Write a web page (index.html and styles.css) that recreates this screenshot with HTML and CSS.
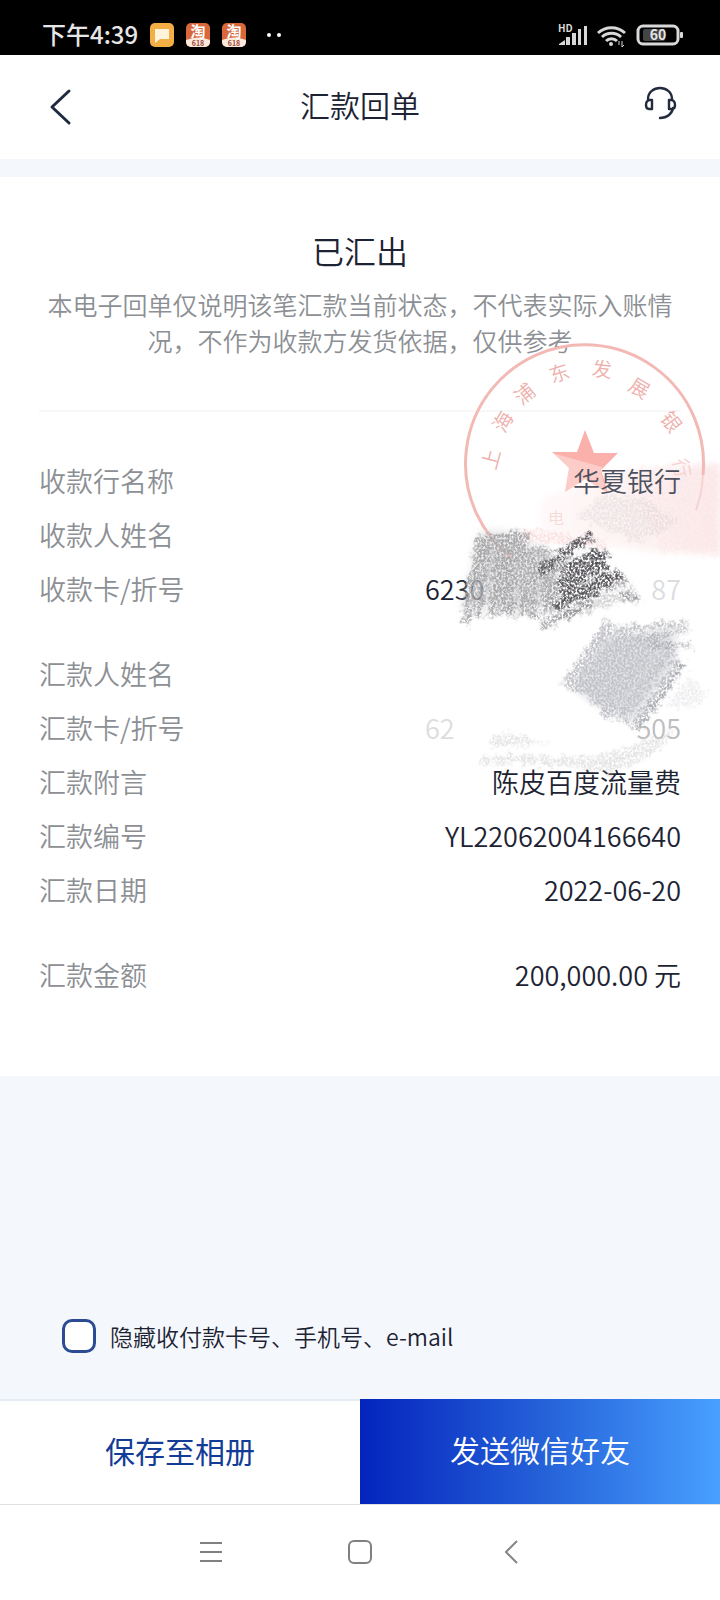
FILE: index.html
```
<!DOCTYPE html>
<html lang="zh-CN">
<head>
    <meta charset="UTF-8">
    <meta name="viewport" content="width=device-width, initial-scale=1.0">
    <title>汇款回单</title>
    <link rel="stylesheet" href="styles.css">
</head>
<body>
    <div class="status-bar">
        <span class="time">下午4:39</span>
        <svg class="app-icon" viewBox="0 0 24 24">
            <rect width="24" height="24" rx="5" fill="#f3ae45"/>
            <path d="M5 6h14v10h-9l-5 4z" fill="#fff3dc"/>
        </svg>
        <svg class="app-icon" viewBox="0 0 24 24">
            <rect width="24" height="24" rx="5" fill="#d9673c"/>
            <path d="M0 17q12-5 24 0v2a5 5 0 0 1-5 5H5a5 5 0 0 1-5-5z" fill="#fbe9df"/>
            <text class="app-name" x="12" y="14">淘</text>
            <text class="app-tag" x="12" y="23">618</text>
        </svg>
        <svg class="app-icon" viewBox="0 0 24 24">
            <rect width="24" height="24" rx="5" fill="#d9673c"/>
            <path d="M0 17q12-5 24 0v2a5 5 0 0 1-5 5H5a5 5 0 0 1-5-5z" fill="#fbe9df"/>
            <text class="app-name" x="12" y="14">淘</text>
            <text class="app-tag" x="12" y="23">618</text>
        </svg>
        <svg class="more" width="16" height="24" viewBox="0 0 16 24" fill="#fff">
            <circle cx="3" cy="12" r="2"/>
            <circle cx="13" cy="12" r="2"/>
        </svg>
        <div class="status-right">
            <svg width="30" height="24" viewBox="0 0 30 24" fill="#d8d8d8">
                <text class="hd" x="0" y="9">HD</text>
                <path d="M1 22v-1l6-4v5zM8 14h4v8H8zM14 10h4v12h-4zM20 6h3v16h-3zM26 3h3v19h-3z"/>
            </svg>
            <svg width="30" height="24" viewBox="0 0 30 24" fill="none" stroke="#d8d8d8" stroke-width="3">
                <path d="M1 10a20 20 0 0 1 27 0M5 14a14 14 0 0 1 19 0M9 18a8 8 0 0 1 11 0"/>
                <circle cx="14" cy="21" r="1" stroke-width="2"/>
                <path d="M22 22v-4M25 18v6M25 24l2-2" stroke-width="1"/>
            </svg>
            <svg width="48" height="24" viewBox="0 0 48 24">
                <rect x="7" y="6" width="22" height="12" rx="2" fill="#444"/>
                <rect x="2" y="3" width="40" height="18" rx="5" fill="none" stroke="#d8d8d8" stroke-width="3"/>
                <rect x="44" y="9" width="3" height="6" rx="1" fill="#d8d8d8"/>
                <text class="battery-level" x="22" y="17">60</text>
            </svg>
        </div>
    </div>

    <header class="header">
        <button class="icon-btn" aria-label="返回">
            <svg width="24" height="36" viewBox="0 0 24 36" fill="none" stroke="#1d2a40" stroke-width="3" stroke-linecap="round" stroke-linejoin="round">
                <path d="M21 2L4 18l17 16"/>
            </svg>
        </button>
        <h1>汇款回单</h1>
        <button class="icon-btn service" aria-label="客服">
            <svg width="34" height="34" viewBox="0 0 34 34" fill="none" stroke="#242b3e" stroke-width="2.4" stroke-linecap="round" stroke-linejoin="round">
                <path d="M5 13C5 6 11 2 17 2s12 4 12 11M30 22c-1 6-6 10-13 10"/>
                <path d="M9 14v9H6c-2 0-3-2-3-4s1-5 4-5zM26 14v9h3c2 0 3-2 3-4s-1-5-4-5z"/>
            </svg>
        </button>
    </header>

    <main>
        <section class="receipt">
            <h2>已汇出</h2>
            <p class="notice">本电子回单仅说明该笔汇款当前状态，不代表实际入账情况，不作为收款方发货依据，仅供参考</p>

            <dl class="details">
                <div class="group">
                    <div class="row"><dt>收款行名称</dt><dd class="bank">华夏银行</dd></div>
                    <div class="row"><dt>收款人姓名</dt><dd></dd></div>
                    <div class="row"><dt>收款卡/折号</dt><dd class="card-no"><span>6230</span><span class="faint">87</span></dd></div>
                </div>
                <div class="group">
                    <div class="row"><dt>汇款人姓名</dt><dd></dd></div>
                    <div class="row"><dt>汇款卡/折号</dt><dd class="card-no"><span class="faint">62</span><span class="worn">505</span></dd></div>
                    <div class="row"><dt>汇款附言</dt><dd>陈皮百度流量费</dd></div>
                    <div class="row"><dt>汇款编号</dt><dd>YL22062004166640</dd></div>
                    <div class="row"><dt>汇款日期</dt><dd>2022-06-20</dd></div>
                </div>
                <div class="group">
                    <div class="row"><dt>汇款金额</dt><dd>200,000.00 元</dd></div>
                </div>
            </dl>

            <!-- seal and the crayon marks over the private fields -->
            <svg class="overlay" width="280" height="440" viewBox="440 340 280 440">
                <defs>
                    <filter id="crayon" x="-15%" y="-15%" width="130%" height="130%">
                        <feTurbulence type="fractalNoise" baseFrequency="0.5 0.4" numOctaves="4" seed="4" result="noise"/>
                        <feTurbulence type="fractalNoise" baseFrequency="0.15" numOctaves="3" seed="9" result="wave"/>
                        <feGaussianBlur in="SourceGraphic" stdDeviation="1.5" result="soft"/>
                        <feDisplacementMap in="soft" in2="wave" scale="14" xChannelSelector="R" yChannelSelector="G" result="rough"/>
                        <feColorMatrix in="noise" type="matrix" values="0 0 0 0 0  0 0 0 0 0  0 0 0 0 0  0 0 0 3.5 -1.1" result="grain"/>
                        <feComposite in="rough" in2="grain" operator="in"/>
                    </filter>
                    <filter id="soft" x="-20%" y="-20%" width="140%" height="140%">
                        <feGaussianBlur stdDeviation="4"/>
                    </filter>
                    <linearGradient id="wash" x1="0" y1="0" x2="1" y2="0">
                        <stop offset="0" stop-color="#fdeeee" stop-opacity="0.4"/>
                        <stop offset="1" stop-color="#fbe6e7" stop-opacity="0.8"/>
                    </linearGradient>
                </defs>

                <path d="M541 500L600 474l120-10v90l-60-2-120-16z" fill="url(#wash)" filter="url(#soft)"/>
                <path d="M630 468l90-5v92l-60-3z" fill="#fbdfe0" opacity="0.35" filter="url(#crayon)"/>
                <path d="M520 528l90 14-2 5-88-7z" fill="#f8d3d4" opacity="0.7" filter="url(#crayon)"/>

                <path d="M512 558A119 119 0 1 1 703 475" fill="none" stroke="#f2b9b5" stroke-width="3"/>
                <path d="M703 475A119 119 0 0 1 696 510" fill="none" stroke="#f6d3d1" stroke-width="2"/>
                <path d="M585 430l9 23h24l-17 17 7 23-23-14-20 13 4-24-17-16h25z" fill="#fbb1ab"/>
                <path d="M552 453l50 14-1 6 5 18-21-12-20 13 4-24z" fill="#fff" opacity="0.35"/>
                <g class="seal-text">
                    <text transform="translate(490 459) rotate(-75)">上</text>
                    <text transform="translate(502 421) rotate(-60)">海</text>
                    <text transform="translate(524 393) rotate(-40)">浦</text>
                    <text transform="translate(559 372) rotate(-18)">东</text>
                    <text transform="translate(602 368) rotate(6)">发</text>
                    <text transform="translate(640 387) rotate(31)">展</text>
                    <text transform="translate(672 421) rotate(53)">银</text>
                    <text class="pale" transform="translate(683 468) rotate(78)">行</text>
                    <text class="seal-small" x="556" y="517">电</text>
                </g>
                <path d="M575 516l30-22 41 4 34 24-40 20-30-10z" fill="#ccc5c8" opacity="0.3" filter="url(#crayon)"/>

                <path d="M479 532l24-2 22 14 20 3 15 12-8 42-28 12-35-7-23 5-5-4 10-36z" fill="#d0d0d2" opacity="0.5" filter="url(#soft)"/>
                <g filter="url(#crayon)" fill="none" stroke="#a8a8ab">
                    <path d="M482 534l-17 90M490 534l-12 82M499 536l-7 82M505 534l-2 80M514 530l-3 88M522 532l2 84M532 546l2 72M542 546l4 66M552 554l2 54" stroke-width="9"/>
                    <path d="M537 578l20-20M552 618l84-30M568 616l66-20M540 616l50-24" stroke-width="6" opacity="0.5"/>
                </g>
                <g filter="url(#crayon)" fill="none" stroke="#59575b">
                    <path d="M592 534l-52 38M606 552l-48 32M606 562l-46 32M622 574l-56 28M612 574l-58 34M600 552l-40 18" stroke-width="9"/>
                    <path d="M640 601l-20-8M628 580l-40 16M592 602l-50 24" stroke-width="7" opacity="0.5"/>
                </g>

                <path d="M604 636l72-6-1 34-42 56-34-14-26-18z" fill="#dfe0e4" opacity="0.9" filter="url(#soft)"/>
                <g filter="url(#crayon)" fill="none" stroke="#c2c3c8">
                    <path d="M612 622l-46 66M624 632l-46 60M636 634l-48 64M648 634l-50 72M660 638l-56 80M672 646l-52 74M682 662l-48 66" stroke-width="13"/>
                    <path d="M684 662l-46 66" stroke-width="6" stroke="#abadb2"/>
                    <path d="M620 629l66-6M640 638l48-8M650 644l42 2" stroke-width="6" stroke="#a6a8ac" opacity="0.7"/>
                </g>
                <path d="M688 676l18 16-5 14-36 2z" fill="#dedee2" opacity="0.5" filter="url(#crayon)"/>
                <path d="M480 758l30-4 80 4 86-28-20 22-44 22-24-6-70-4-38 2zM490 738l20-4 40 10-60 2z" fill="#cbcbce" opacity="0.5" filter="url(#crayon)"/>
            </svg>
        </section>

        <label class="hide-option">
            <input type="checkbox">
            <span>隐藏收付款卡号、手机号、e-mail</span>
        </label>
    </main>

    <div class="actions">
        <button class="btn-save">保存至相册</button>
        <button class="btn-send">发送微信好友</button>
    </div>

    <nav class="system-nav">
        <button aria-label="菜单">
            <svg width="26" height="26" viewBox="0 0 26 26" fill="none" stroke="#808080" stroke-width="2">
                <path d="M2 3h22M2 12h22M2 21h22"/>
            </svg>
        </button>
        <button aria-label="主页">
            <svg width="26" height="26" viewBox="0 0 26 26" fill="none" stroke="#808080" stroke-width="2">
                <rect x="2" y="1" width="22" height="22" rx="5"/>
            </svg>
        </button>
        <button aria-label="返回">
            <svg width="26" height="26" viewBox="0 0 26 26" fill="none" stroke="#85868a" stroke-width="2">
                <path d="M21 1L10 12l11 11"/>
            </svg>
        </button>
    </nav>
</body>
</html>
```
FILE: styles.css
```
* {
    box-sizing: border-box;
}

body {
    margin: 0;
    min-height: 100vh;
    display: flex;
    flex-direction: column;
    font-family: "Noto Sans CJK SC", sans-serif;
    font-weight: 350;
    color: #1d2333;
    background-color: #f4f8fc;
}

button {
    padding: 0;
    border: none;
    background: none;
    font: inherit;
    cursor: pointer;
}

svg {
    display: block;
    overflow: visible;
}

.status-bar {
    display: flex;
    align-items: center;
    gap: 12px;
    height: 55px;
    padding: 14px 36px 0 42px;
    background-color: #000;
    color: #e6e6e6;
}

.time {
    font-size: 24px;
    font-weight: 500;
    line-height: 24px;
    padding-bottom: 2px;
}

.app-icon {
    width: 24px;
    height: 24px;
}

.app-name {
    font-size: 15px;
    font-weight: 700;
    fill: #fff;
    text-anchor: middle;
}

.app-tag {
    font-size: 7px;
    font-weight: 700;
    fill: #9c4a35;
    text-anchor: middle;
}

.more {
    margin-left: 8px;
}

.status-right {
    display: flex;
    gap: 9px;
    margin-left: auto;
}

.hd {
    font-size: 10px;
    font-weight: 700;
}

.battery-level {
    font-size: 14px;
    font-weight: 700;
    fill: #e6e6e6;
    text-anchor: middle;
}

.header {
    display: flex;
    align-items: center;
    justify-content: space-between;
    height: 104px;
    padding: 0 42px;
    background-color: #fff;
}

.header h1 {
    margin: 0;
    padding-bottom: 6px;
    font-size: 30px;
    font-weight: 350;
    line-height: 40px;
}

.icon-btn {
    display: flex;
    justify-content: center;
    width: 36px;
}

.service {
    padding-bottom: 8px;
}

main {
    flex: 1;
    display: flex;
    flex-direction: column;
    padding-top: 18px;
}

.receipt {
    position: relative;
    padding: 49px 39px 74px;
    background-color: #fff;
}

.receipt h2 {
    margin: 0;
    font-size: 32px;
    font-weight: 350;
    line-height: 48px;
    text-align: center;
}

.notice {
    margin: 12px 0 0;
    padding: 0 8px 52px;
    border-bottom: 2px solid #f7f7f8;
    font-size: 25px;
    line-height: 36px;
    text-align: center;
    color: #8c8f94;
}

.details {
    display: flex;
    flex-direction: column;
    gap: 31px;
    margin: 42px 0 0;
}

.row {
    display: flex;
    justify-content: space-between;
    font-size: 27px;
    line-height: 54px;
}

.row dt {
    color: #8c8f94;
}

.row dd {
    margin: 0;
}

.row .bank {
    position: relative;
    z-index: 1;
    color: #4d505d;
}

.card-no {
    display: flex;
    justify-content: space-between;
    width: 256px;
}

.faint {
    color: #dcdde0;
}

.worn {
    color: #bcbdc0;
}

.overlay {
    position: absolute;
    top: 163px;
    right: 0;
    pointer-events: none;
}

.seal-text {
    font-size: 20px;
    fill: #eeb0ac;
    text-anchor: middle;
    dominant-baseline: central;
}

.seal-text .pale {
    fill: #f6d2d1;
}

.seal-text .seal-small {
    font-size: 16px;
    fill: #f6dad6;
}

.hide-option {
    display: flex;
    align-items: center;
    gap: 14px;
    margin-top: auto;
    padding: 0 62px 42px;
    font-size: 23px;
    line-height: 42px;
}

.hide-option input {
    appearance: none;
    width: 34px;
    height: 34px;
    margin: 0;
    border: 3px solid #2b4c94;
    border-radius: 10px;
    background-color: #fff;
}

.actions {
    display: flex;
    height: 105px;
}

.actions button {
    flex: 1;
    padding-bottom: 5px;
    font-size: 30px;
}

.actions .btn-save {
    border-top: 2px solid #e6ecf3;
    background-color: #fff;
    color: #123c96;
    font-weight: 400;
}

.actions .btn-send {
    background: linear-gradient(to right, #0424bd, #2460d8 50%, #48a0ff);
    color: #fff;
}

.system-nav {
    display: flex;
    justify-content: center;
    align-items: center;
    gap: 123px;
    height: 96px;
    border-top: 1px solid #e0e0e0;
    background-color: #fff;
}
```
